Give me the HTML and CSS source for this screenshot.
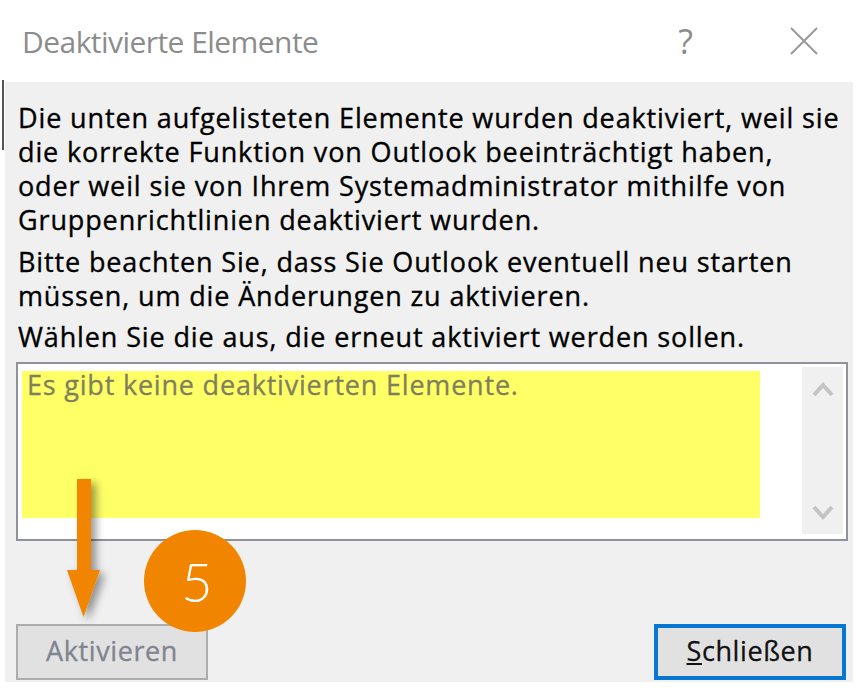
FILE: index.html
```html
<!DOCTYPE html>
<html lang="de">

<head>
  <meta charset="UTF-8">
  <title>Deaktivierte Elemente</title>
  <link rel="stylesheet" href="styles.css">
</head>

<body>
  <div class="dialog">
    <header class="titlebar">
      <h1 class="title">Deaktivierte Elemente</h1>
      <span class="help">?</span>
      <svg class="close" width="30" height="30" viewBox="0 0 30 30">
        <path d="M2 2 L28 28 M28 2 L2 28" fill="none" stroke="#999" stroke-width="2" />
      </svg>
    </header>

    <main class="panel">
      <p class="text first">Die unten aufgelisteten Elemente wurden deaktiviert, weil sie<br>die korrekte Funktion von Outlook beeinträchtigt haben,<br>oder weil sie von Ihrem Systemadministrator mithilfe von<br>Gruppenrichtlinien deaktiviert wurden.</p>
      <p class="text">Bitte beachten Sie, dass Sie Outlook eventuell neu starten<br>müssen, um die Änderungen zu aktivieren.</p>
      <p class="text">Wählen Sie die aus, die erneut aktiviert werden sollen.</p>

      <div class="listbox">
        <div class="list-area">
          <div class="highlight">Es gibt keine deaktivierten Elemente.</div>
        </div>
        <div class="scrollbar">
          <svg width="24" height="18" viewBox="0 0 24 18">
            <path d="M3 15 L12 5 L21 15" fill="none" stroke="#c4c4c4" stroke-width="4" />
          </svg>
          <svg width="24" height="18" viewBox="0 0 24 18">
            <path d="M3 3 L12 13 L21 3" fill="none" stroke="#c4c4c4" stroke-width="4" />
          </svg>
        </div>
      </div>

      <div class="buttons">
        <button class="btn disabled">Aktivieren</button>
        <button class="btn default"><u>S</u>chließen</button>
      </div>

      <!-- orange annotation on top of the dialog -->
      <svg class="arrow" width="50" height="150" viewBox="0 0 50 150">
        <defs>
          <filter id="arrowShadow" x="-40%" y="-10%" width="200%" height="130%">
            <feDropShadow dx="5" dy="4" stdDeviation="4" flood-color="#000" flood-opacity="0.4" />
          </filter>
        </defs>
        <path d="M11 1 H25 V92 H34 L17.5 139 L1 92 H11 Z" fill="#f28500" filter="url(#arrowShadow)" />
      </svg>
      <div class="badge">5</div>
    </main>
  </div>
</body>

</html>
```

FILE: styles.css
```css
* {
  box-sizing: border-box;
}

html,
body {
  height: 100%;
}

body {
  margin: 0;
  background-color: #fff;
  font-family: "Open Sans", "Noto Sans", Arial, sans-serif;
  overflow: hidden;
}

.dialog {
  width: 856px;
  height: 688px;
  display: flex;
  flex-direction: column;
}

.titlebar {
  height: 82px;
  flex: none;
  display: flex;
  align-items: center;
  padding: 0 37px 0 22px;
}

.title {
  flex: 1;
  margin: 0;
  font-size: 30px;
  font-weight: 400;
  letter-spacing: -0.55px;
  color: #8c8c8c;
}

.help {
  font-size: 34px;
  color: #8c8c8c;
  margin-right: 94px;
  padding-right: 2px;
}

.panel {
  position: relative;
  height: 600px;
  margin: 0 3px 0 5px;
  padding: 19px 5px 0 11px;
  background-color: #f0f0f0;
}

/* dark sliver on the left edge of the panel */
.panel::before {
  content: "";
  position: absolute;
  left: -3px;
  top: -2px;
  width: 2px;
  height: 70px;
  background-color: #555;
}

.text {
  margin: 0 0 7px;
  padding-left: 2px;
  font-size: 27px;
  letter-spacing: 0.87px;
  line-height: 34px;
  color: #000;
  -webkit-text-stroke: 0.35px #000;
  white-space: nowrap;
}

.text.first {
  margin-bottom: 8px;
}

.listbox {
  height: 179px;
  margin-top: 8px;
  padding: 3px 3px 5px 0;
  display: flex;
  border: 2px solid #8f929c;
  background-color: #fff;
}

.list-area {
  flex: 1;
  padding: 4px 0 0 4px;
}

.highlight {
  width: 738px;
  height: 147px;
  padding-left: 5px;
  background-color: #ffff66;
  color: #7f7f5e;
  font-size: 27px;
  letter-spacing: 0.8px;
  line-height: 28px;
  -webkit-text-stroke: 0.3px #7f7f5e;
}

.scrollbar {
  width: 41px;
  display: flex;
  flex-direction: column;
  justify-content: space-between;
  align-items: center;
  padding: 13px 0 12px;
  background-color: #f0f0f0;
}

.buttons {
  display: flex;
  justify-content: space-between;
  align-items: flex-end;
  margin-top: 83px;
  padding-right: 2px;
}

.btn {
  height: 56px;
  font-family: inherit;
  font-size: 27px;
  letter-spacing: 0.6px;
  border-radius: 0;
  background-color: #e1e1e1;
  padding: 0 0 3px;
}

.disabled {
  width: 192px;
  border: 2px solid #adadad;
  color: #7f8490;
  -webkit-text-stroke: 0.3px #7f8490;
}

.default {
  width: 192px;
  border: 4px solid #0678d4;
  color: #111;
  -webkit-text-stroke: 0.3px #111;
  outline: none;
}

.arrow {
  position: absolute;
  left: 61px;
  top: 396px;
}

.badge {
  position: absolute;
  left: 139px;
  top: 448px;
  width: 102px;
  height: 102px;
  border-radius: 50%;
  background-color: #f28500;
  color: #fff;
  font-family: "Lato", sans-serif;
  font-weight: 300;
  font-size: 54px;
  padding-left: 4px;
  display: flex;
  align-items: center;
  justify-content: center;
}
```
